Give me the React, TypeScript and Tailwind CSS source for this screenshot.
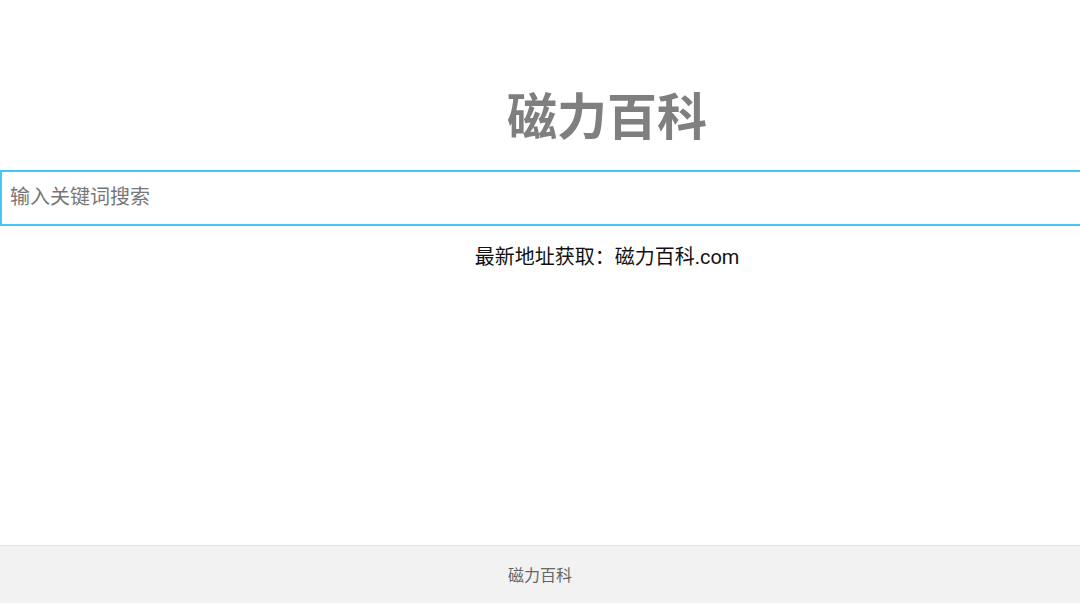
import React from "react";

const font = { fontFamily: 'Roboto, "Noto Sans CJK SC", sans-serif' };

const App: React.FC = () => {
  return (
    <div className="h-[608px] flex flex-col bg-white" style={font}>
      <main className="flex-1">
        <div className="pl-[134px] pt-[93px] text-center">
          <h1 className="text-[50px] leading-[50px] font-bold text-[#7f7f7f]">磁力百科</h1>
        </div>

        <div className="mt-[27px]">
          <input
            className="w-full h-[56px] border-2 border-r-0 border-[#45c6f6] pl-[8px] pr-[10px] pb-[2px] text-[20px] text-[#333] placeholder:text-[#777] focus:outline-none"
            placeholder="输入关键词搜索"
          />
        </div>

        <div className="pl-[134px] mt-[16px] text-center">
          <p className="text-[20px] leading-[30px] text-[#111]">最新地址获取：磁力百科.com</p>
        </div>
      </main>

      {/* Footer */}
      <footer className="h-[58px] mb-[5px] pt-[3px] flex items-center justify-center bg-[#f2f2f2] border-t border-[#e4e4e4]">
        <span className="text-[16px] text-[#666]">磁力百科</span>
      </footer>
    </div>
  );
};

export default App;
